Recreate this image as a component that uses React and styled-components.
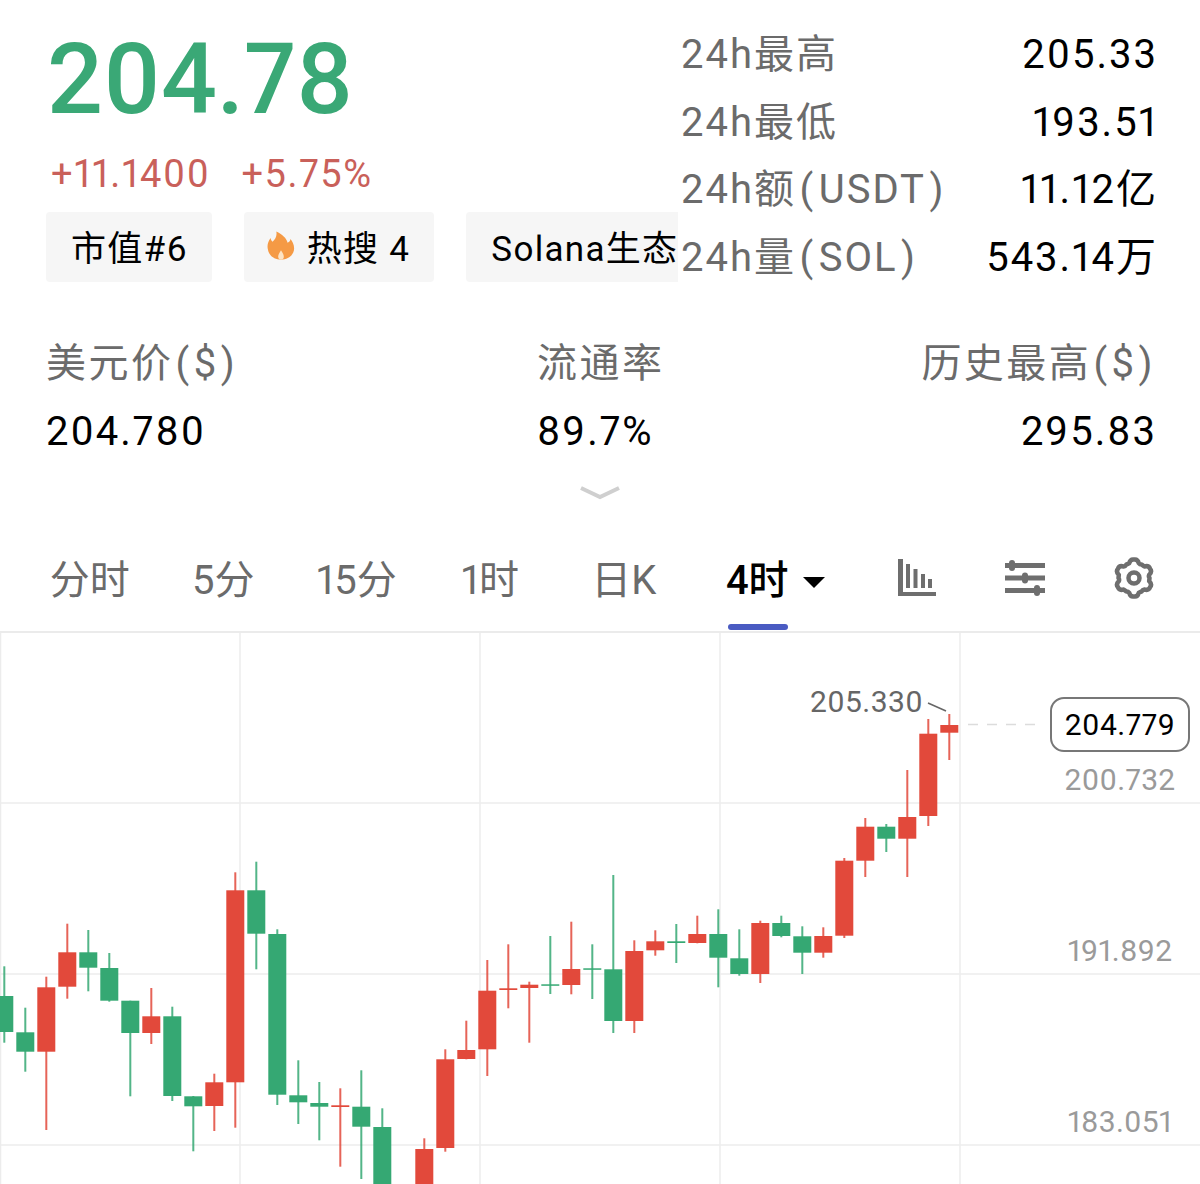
import React from 'react';
import styled, { createGlobalStyle } from 'styled-components';

const GREEN = '#35a873';
const RED = '#e2493b';
const CHART_TOP = 633;

// [color, wick top, wick bottom, body top, body bottom], screen y, one every 21px
const CANDLES = [
  ['g', 966.3, 1042.7, 996, 1032],
  ['g', 1007.7, 1071.7, 1032.3, 1051.7],
  ['r', 976.7, 1130, 987.3, 1051.7],
  ['r', 923.7, 998.7, 952.3, 986.7],
  ['g', 930, 991.3, 952.3, 967.7],
  ['g', 953, 1001.7, 968, 1000.7],
  ['g', 1000.7, 1096.3, 1000.7, 1033],
  ['r', 988, 1044, 1016.3, 1033],
  ['g', 1006.7, 1101, 1016.3, 1096],
  ['g', 1096, 1151.3, 1096.3, 1106.3],
  ['r', 1073.7, 1131, 1082.3, 1106],
  ['r', 872.3, 1127.7, 890.3, 1082.3],
  ['g', 861.7, 969.3, 890.3, 933.7],
  ['g', 929.3, 1105, 934, 1094.7],
  ['g', 1060.3, 1124, 1095.3, 1102.3],
  ['g', 1082, 1140.3, 1103, 1106.7],
  ['r', 1088.3, 1166.7, 1105.3, 1107],
  ['g', 1070.3, 1179, 1106.7, 1126.7],
  ['g', 1108.3, 1190, 1127, 1190],
  null,
  ['r', 1138.3, 1190, 1149, 1190],
  ['r', 1049.3, 1151.7, 1059.3, 1148],
  ['r', 1020.7, 1059.3, 1050, 1059],
  ['r', 960, 1076, 990.7, 1049.3],
  ['r', 944.3, 1008.3, 988.3, 990],
  ['r', 981.7, 1042.7, 984.7, 988],
  ['g', 936, 994, 984.3, 985.7],
  ['r', 921.7, 994.3, 969, 985],
  ['g', 944.3, 999, 968.3, 969.7],
  ['g', 875, 1033, 969.3, 1021],
  ['r', 940.3, 1033, 951, 1021],
  ['r', 930.3, 955.7, 941.3, 950.3],
  ['g', 924, 963, 941.3, 943],
  ['r', 915.7, 943.3, 934, 943],
  ['g', 909.3, 987.3, 934, 957.7],
  ['g', 929.3, 975.7, 958.3, 974],
  ['r', 920.7, 983, 923, 974],
  ['g', 915.7, 937.3, 923, 936],
  ['g', 926.3, 974, 936.3, 952.7],
  ['r', 927.3, 957.7, 936, 952.7],
  ['r', 858, 938, 860.7, 935.7],
  ['r', 818, 877, 826.7, 860.7],
  ['g', 824, 852, 826.7, 838.7],
  ['r', 770, 877, 817, 838.7],
  ['r', 719, 826, 733.7, 816],
  ['r', 714, 760, 725, 732.7],
];

const GlobalStyle = createGlobalStyle`
  html, body {
    margin: 0;
    padding: 0;
    background: #fff;
  }
  body {
    font-family: Roboto, "Noto Sans CJK SC", sans-serif;
    font-variant-numeric: proportional-nums;
    font-feature-settings: "pnum";
    color: #000;
  }
`;

const Page = styled.div`
  width: 1200px;
  height: 1184px;
  overflow: hidden;
  background: #fff;
`;

const Top = styled.div`
  display: flex;
`;

const Quote = styled.div`
  width: 678px;
  box-sizing: border-box;
  flex: none;
  padding: 26px 0 0 46px;
  overflow: hidden;
`;

const Price = styled.div`
  font-size: 98.5px;
  line-height: 108px;
  font-weight: 500;
  color: #3aa876;
  padding-left: 1px;
`;

const Changes = styled.div`
  display: flex;
  gap: 31px;
  margin-top: 16px;
  padding-left: 5px;
  font-size: 38px;
  line-height: 48px;
  letter-spacing: 1.6px;
  color: #c9605a;
`;

const Tags = styled.div`
  display: flex;
  gap: 32px;
  margin-top: 14px;
`;

const Tag = styled.div`
  flex: none;
  display: flex;
  align-items: center;
  box-sizing: border-box;
  height: 70px;
  padding: 0 24px 3px ${(p) => (p.$icon ? 22 : 25)}px;
  gap: 11px;
  background: #f6f6f6;
  border-radius: 4px;
  font-size: 35px;
  letter-spacing: 1.3px;
  white-space: pre;
`;

const Stats = styled.div`
  flex: 1;
  padding: 21px 42px 0 3px;
`;

const StatRow = styled.div`
  display: flex;
  justify-content: space-between;
  align-items: baseline;
  height: 67.5px;
  line-height: 67.5px;
  font-size: 40px;
  letter-spacing: 2px;
`;

const StatLabel = styled.span`
  color: #6b6b6b;
`;

const Paren = styled.span`
  margin: 0 3.5px;
`;

const Metrics = styled.div`
  display: grid;
  grid-template-columns: 491px 1fr auto;
  margin-top: 49px;
  padding: 0 43px 0 46px;
`;

const Metric = styled.div`
  text-align: ${(p) => (p.$right ? 'right' : 'left')};
`;

const MetricLabel = styled.div`
  font-size: 40px;
  line-height: 48px;
  letter-spacing: 2.5px;
  color: #6b6b6b;

  ${Paren} {
    margin: 0 2px;
  }
`;

const MetricValue = styled.div`
  font-size: 40px;
  line-height: 48px;
  letter-spacing: 2px;
  margin-top: 20px;
`;

const Expand = styled.div`
  display: flex;
  justify-content: center;
  margin-top: 29px;
  height: 16px;
`;

const Tabs = styled.div`
  display: flex;
  align-items: center;
  box-sizing: border-box;
  height: 132px;
  padding: 30px 0 0 23px;
  border-bottom: 2px solid #ebebeb;
`;

const Tab = styled.div`
  position: relative;
  flex: none;
  width: 133.5px;
  text-align: center;
  font-size: 40px;
  line-height: 48px;
  color: ${(p) => (p.$active ? '#000' : '#6b6b6b')};
  font-weight: ${(p) => (p.$active ? 500 : 400)};
`;

const Underline = styled.div`
  position: absolute;
  left: 37px;
  bottom: -25px;
  width: 60px;
  height: 6px;
  border-radius: 3px;
  background: #4a5bc2;
`;

const Caret = styled.div`
  position: absolute;
  left: 112px;
  top: 20px;
  width: 0;
  height: 0;
  border-left: 11.5px solid transparent;
  border-right: 11.5px solid transparent;
  border-top: 11px solid #000;
`;

const ToolIcons = styled.div`
  display: flex;
  align-items: center;
  margin: 0 0 6px 74px;
  gap: 68px;
`;

const Chart = styled.div`
  position: relative;
  height: 551px;
`;

const ChartSvg = styled.svg`
  display: block;
  width: 1200px;
  height: 551px;
`;

const AxisLabel = styled.div`
  position: absolute;
  right: 0;
  width: 160px;
  text-align: center;
  top: ${(p) => p.$top}px;
  font-size: 30px;
  line-height: 36px;
  letter-spacing: 0.3px;
  color: #9a9a9a;
`;

const LastPrice = styled.div`
  position: absolute;
  left: 1050px;
  top: 64px;
  width: 140px;
  height: 55px;
  box-sizing: border-box;
  display: flex;
  align-items: center;
  justify-content: center;
  border: 2px solid #777;
  border-radius: 14px;
  background: #fff;
  font-size: 30px;
  letter-spacing: 0.5px;
`;

const HighLabel = styled.div`
  position: absolute;
  left: 810px;
  top: 51px;
  font-size: 30px;
  line-height: 36px;
  letter-spacing: 0.4px;
  color: #666;
`;

const STATS = [
  ['24h最高', '205.33'],
  ['24h最低', '193.51'],
  [<>24h额<Paren>(</Paren>USDT<Paren>)</Paren></>, '11.12亿'],
  [<>24h量<Paren>(</Paren>SOL<Paren>)</Paren></>, '543.14万'],
];

function Flame() {
  return (
    <svg width="30" height="31" viewBox="0 0 32 32">
      <path
        d="M11 1c1 5 -1 8 -4 11c-1 -1 -2 -2 -2 -4c-3 4 -4 8 -3 12c1 7 7 11 14 11c8 0 14 -5 14 -12c0 -4 -2 -8 -4 -10c0 2 -1 3 -3 4c-1 -5 -6 -9 -12 -12z"
        fill="#f59a45"
      />
      <path d="M16 21c-2 3 -3 5 -3 7c0 2 1 3 3 3s3 -1 3 -3c0 -2 -1 -4 -3 -7z" fill="#fde3c4" />
    </svg>
  );
}

function Chevron() {
  return (
    <svg width="42" height="16" viewBox="0 0 42 16">
      <path d="M2 3l19 9l19 -9" fill="none" stroke="#cfcfcf" strokeWidth="4" />
    </svg>
  );
}

function BarsIcon() {
  return (
    <svg width="39" height="38" viewBox="0 0 39 38" fill="#6e6e6e">
      <rect x="0" y="0" width="5" height="37" />
      <rect x="0" y="33" width="38" height="4" />
      <rect x="8" y="5" width="4" height="24" />
      <rect x="15.5" y="10" width="4" height="19" />
      <rect x="23" y="15" width="4" height="14" />
      <rect x="30" y="20" width="4" height="9" />
    </svg>
  );
}

function SlidersIcon() {
  return (
    <svg width="40" height="36" viewBox="0 0 40 36" fill="#6e6e6e">
      <rect x="0" y="3" width="40" height="5" />
      <rect x="0" y="15.5" width="40" height="5" />
      <rect x="0" y="28" width="40" height="5" />
      <rect x="4" y="0" width="6" height="11" rx="3" />
      <rect x="17" y="12.5" width="6" height="11" rx="3" />
      <rect x="29" y="25" width="6" height="11" rx="3" />
    </svg>
  );
}

function gearPath(cx, cy, outer, inner, teeth) {
  const step = (Math.PI * 2) / teeth;
  const points = [];
  for (let i = 0; i < teeth; i++) {
    const a = -Math.PI / 2 + i * step;
    const at = (r, t) => `${(cx + r * Math.cos(t)).toFixed(2)} ${(cy + r * Math.sin(t)).toFixed(2)}`;
    points.push(`L${at(inner, a - step * 0.3)}`);
    points.push(`Q${at(outer + 1, a - step * 0.18)} ${at(outer, a)}`);
    points.push(`Q${at(outer + 1, a + step * 0.18)} ${at(inner, a + step * 0.3)}`);
    points.push(`Q${at(inner - 1, a + step * 0.4)} ${at(inner, a + step * 0.5)}`);
  }
  return 'M' + points.join(' ').slice(1) + 'Z';
}

function GearIcon() {
  return (
    <svg width="42" height="42" viewBox="0 0 42 42" fill="none" stroke="#6e6e6e">
      <path d={gearPath(21, 21, 18.5, 15.5, 6)} strokeWidth="4.5" strokeLinejoin="round" />
      <circle cx="21" cy="21" r="5.5" strokeWidth="4.5" />
    </svg>
  );
}

function Candle({ data, index }) {
  const x = 4.3 + index * 21;
  const color = data[0] === 'g' ? GREEN : RED;
  const [, wickTop, wickBottom, bodyTop, bodyBottom] = data;
  return (
    <g fill={color}>
      <rect x={x - 1} y={wickTop} width={2} height={wickBottom - wickTop} opacity={0.85} />
      <rect x={x - 9} y={bodyTop} width={18} height={Math.max(bodyBottom - bodyTop, 1.5)} />
    </g>
  );
}

function CandleChart() {
  return (
    <ChartSvg viewBox={`0 ${CHART_TOP} 1200 551`}>
      <g stroke="#ececec" strokeWidth="1.5">
        {[0.5, 240, 480, 720, 960].map((x) => (
          <line key={x} x1={x} x2={x} y1={CHART_TOP} y2={1184} />
        ))}
        {[803, 974, 1145].map((y) => (
          <line key={y} x1={0} x2={1200} y1={y} y2={y} />
        ))}
      </g>
      {CANDLES.map((c, i) => c && <Candle key={i} data={c} index={i} />)}
      <path d="M928 703L946 711" stroke="#666" strokeWidth="1.5" />
      <path d="M968 724.5H1042" stroke="#dcdcdc" strokeWidth="1.5" strokeDasharray="10 9" />
    </ChartSvg>
  );
}

export default function App() {
  return (
    <Page>
      <GlobalStyle />
      <Top>
        <Quote>
          <Price>204.78</Price>
          <Changes>
            <span>+11.1400</span>
            <span>+5.75%</span>
          </Changes>
          <Tags>
            <Tag>市值#6</Tag>
            <Tag $icon>
              <Flame />
              <span>热搜 4</span>
            </Tag>
            <Tag>Solana生态</Tag>
          </Tags>
        </Quote>
        <Stats>
          {STATS.map(([label, value]) => (
            <StatRow key={value}>
              <StatLabel>{label}</StatLabel>
              <span>{value}</span>
            </StatRow>
          ))}
        </Stats>
      </Top>
      <Metrics>
        <Metric>
          <MetricLabel>美元价<Paren>(</Paren>$<Paren>)</Paren></MetricLabel>
          <MetricValue>204.780</MetricValue>
        </Metric>
        <Metric>
          <MetricLabel>流通率</MetricLabel>
          <MetricValue>89.7%</MetricValue>
        </Metric>
        <Metric $right>
          <MetricLabel>历史最高<Paren>(</Paren>$<Paren>)</Paren></MetricLabel>
          <MetricValue>295.83</MetricValue>
        </Metric>
      </Metrics>
      <Expand>
        <Chevron />
      </Expand>
      <Tabs>
        <Tab>分时</Tab>
        <Tab>5分</Tab>
        <Tab>15分</Tab>
        <Tab>1时</Tab>
        <Tab>日K</Tab>
        <Tab $active>
          4时
          <Caret />
          <Underline />
        </Tab>
        <ToolIcons>
          <BarsIcon />
          <SlidersIcon />
          <GearIcon />
        </ToolIcons>
      </Tabs>
      <Chart>
        <CandleChart />
        <HighLabel>205.330</HighLabel>
        <LastPrice>204.779</LastPrice>
        <AxisLabel $top={129}>200.732</AxisLabel>
        <AxisLabel $top={300}>191.892</AxisLabel>
        <AxisLabel $top={471}>183.051</AxisLabel>
      </Chart>
    </Page>
  );
}
